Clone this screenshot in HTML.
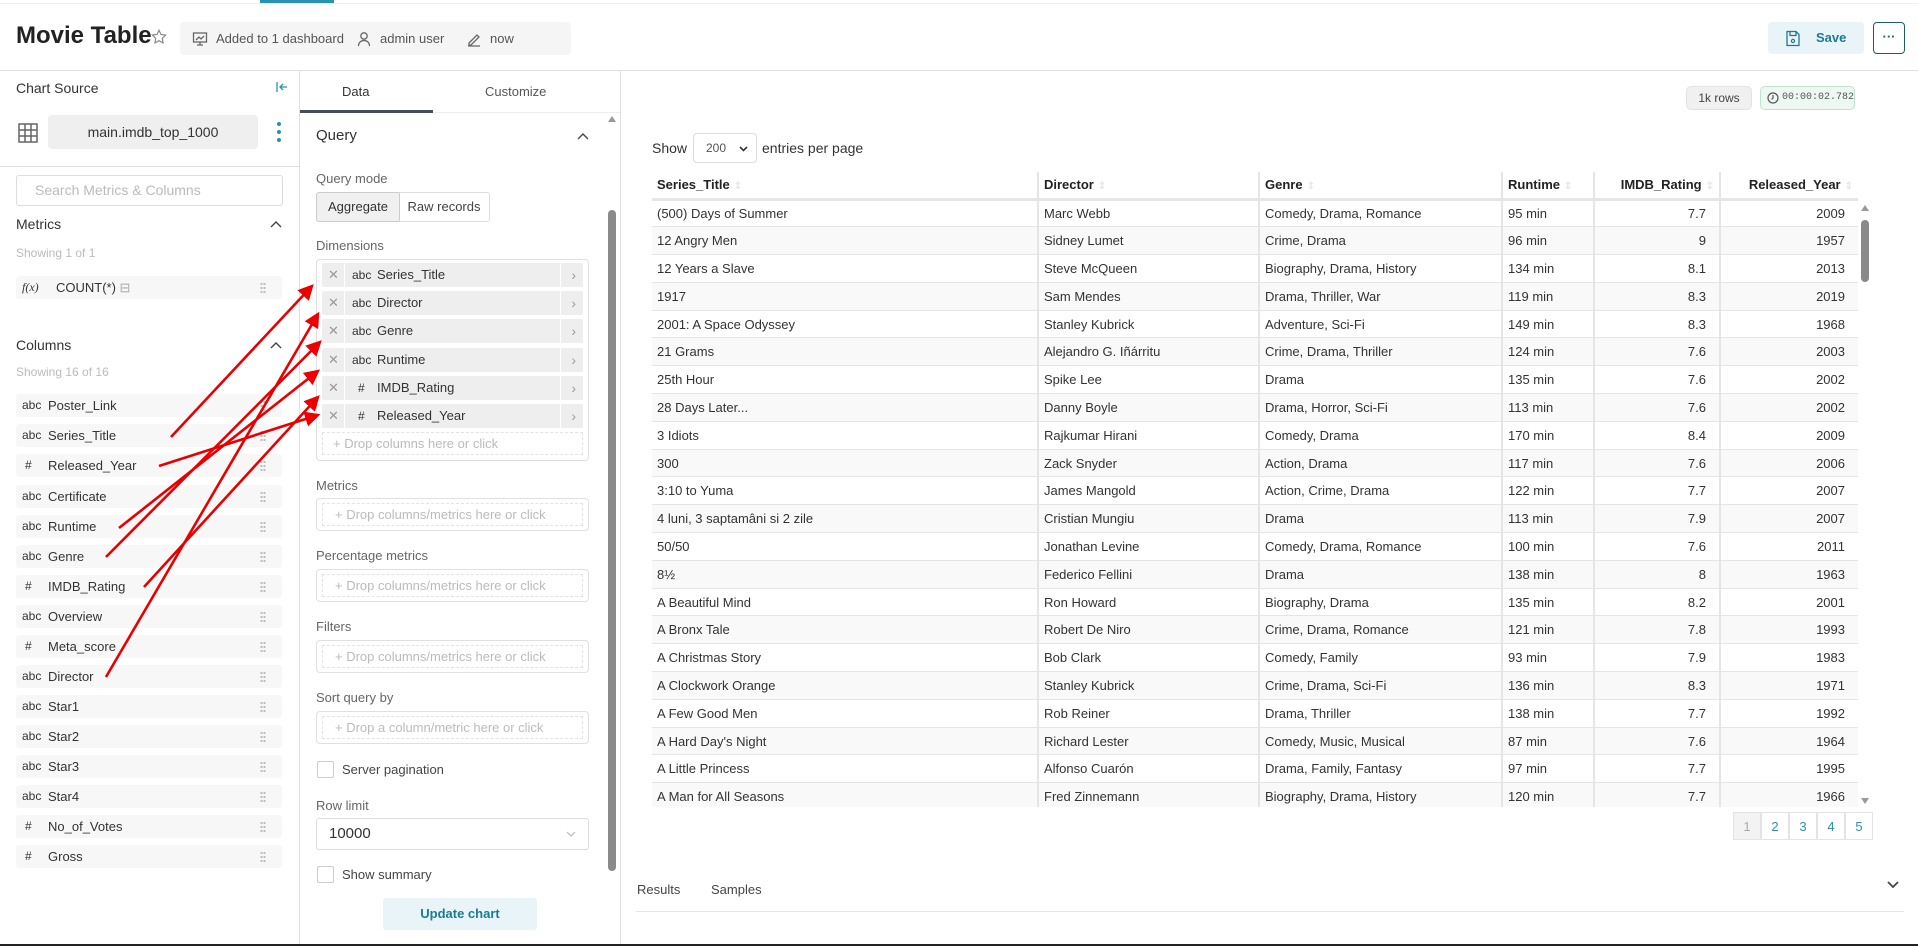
<!DOCTYPE html>
<html><head><meta charset="utf-8">
<style>
*{box-sizing:border-box;margin:0;padding:0}
body{width:1918px;height:946px;overflow:hidden;background:#fff;font-family:"Liberation Sans",sans-serif;color:#333;position:relative;font-size:13px}
.a{position:absolute}
.row{position:absolute;left:16px;width:266px;height:23px;background:#f7f7f7;border-radius:3px;font-size:13px;color:#333;line-height:23px}
.row .t{position:absolute;left:6px;font-size:12px;color:#333}
.row .t.h{left:9px}
.row .n{position:absolute;left:32px}
.grip{position:absolute;right:16px;top:6px;width:6px;height:11px;background:radial-gradient(circle,#bbb 1px,transparent 1.3px) 0 0/3px 4px}
.dim{position:absolute;left:322px;width:261px;height:24px;background:#eee;border-radius:2px;font-size:13px;line-height:24px}
.dim .x{position:absolute;left:6px;color:#999;font-size:13px}
.dim .sep{position:absolute;left:22px;top:0;width:1px;height:24px;background:#fff}
.dim .sep2{position:absolute;right:22px;top:0;width:1px;height:24px;background:#fff}
.dim .t{position:absolute;left:30px;font-size:12px}
.dim .t.h{left:36px}
.dim .n{position:absolute;left:55px}
.dim .c{position:absolute;right:7px;color:#999;font-size:14px}
.drop{position:absolute;left:316px;width:273px;height:33px;border:1px solid #e0e0e0;border-radius:4px}
.drop div{position:absolute;left:5px;right:5px;top:4px;bottom:4px;border:1px dashed #e3e3e3;color:#bbb;font-size:13px;line-height:22px;padding-left:12px}
table{border-collapse:collapse;font-size:13px;color:#333;table-layout:fixed}
td{height:27.8px;padding:0 5px;border-bottom:1px solid #e5e5e5;white-space:nowrap;overflow:hidden}
td.r{text-align:right;padding-right:13px}
td+td{border-left:2px solid #e5e5e5}
tr:nth-child(odd) td{background:#f9f9f9}
th{height:27px;text-align:left;padding:0 5px;font-weight:bold;font-size:13px;border-bottom:3px solid #e5e5e5;color:#222}
th+th{border-left:2px solid #e5e5e5}
th.r{text-align:right}
th span{color:#ddd;font-size:10px;font-weight:normal;margin-left:4px}
.chk{position:absolute;left:317px;width:17px;height:17px;border:1px solid #ccc;border-radius:2px}
.pg{position:absolute;top:812px;height:28px;width:28px;border:1px solid #e3e3e3;text-align:center;line-height:27px;color:#2f8fa8;font-size:13px}
.up{position:absolute}
</style></head><body>
<div class="a" style="left:0;top:3px;width:1918px;height:1px;background:#eee"></div>
<div class="a" style="left:260px;top:0;width:74px;height:3px;background:#2893b0"></div>
<div class="a" style="left:16px;top:22px;font-size:24px;font-weight:bold;color:#222">Movie Table</div>
<svg class="a" style="left:150px;top:28px" width="18" height="18" viewBox="0 0 24 24"><path d="M12 3l2.7 5.6 6.1.8-4.4 4.3 1 6.1L12 16.9 6.6 19.8l1-6.1L3.2 9.4l6.1-.8z" fill="none" stroke="#888" stroke-width="1.6"/></svg>
<div class="a" style="left:180px;top:22px;width:391px;height:33px;background:#f5f5f5;border-radius:4px;font-size:13px;color:#555;line-height:33px">
<svg class="a" style="left:12px;top:9px" width="16" height="16" viewBox="0 0 16 16"><rect x="1.5" y="2" width="13" height="9" fill="none" stroke="#666" stroke-width="1.3"/><path d="M4 9l3-3 2 2 3-3M8 11v3M5 14h6" fill="none" stroke="#666" stroke-width="1.3"/></svg>
<span class="a" style="left:36px">Added to 1 dashboard</span>
<svg class="a" style="left:176px;top:9px" width="16" height="16" viewBox="0 0 16 16"><circle cx="8" cy="5" r="3.2" fill="none" stroke="#666" stroke-width="1.3"/><path d="M2.5 15c0-3.5 2.5-5.5 5.5-5.5s5.5 2 5.5 5.5" fill="none" stroke="#666" stroke-width="1.3"/></svg>
<span class="a" style="left:200px">admin user</span>
<svg class="a" style="left:286px;top:9px" width="16" height="16" viewBox="0 0 16 16"><path d="M3 12l8-8 2 2-8 8H3zM2 15h12" fill="none" stroke="#666" stroke-width="1.3"/></svg>
<span class="a" style="left:310px">now</span>
</div>
<div class="a" style="left:1768px;top:22px;width:96px;height:32px;background:#e8f4f8;border-radius:4px;color:#1f7a8f;font-weight:bold;font-size:13px;line-height:32px">
<svg class="a" style="left:17px;top:8px" width="16" height="17" viewBox="0 0 16 17"><path d="M2 1.5h9l3 3v11H2z M5 1.5v4h6v-4" fill="none" stroke="#1f7a8f" stroke-width="1.3"/><circle cx="8" cy="11" r="1.6" fill="none" stroke="#1f7a8f" stroke-width="1.2"/></svg>
<span class="a" style="left:48px">Save</span></div>
<div class="a" style="left:1873px;top:22px;width:32px;height:32px;border:1px solid #1f5c6b;border-radius:4px;text-align:center;line-height:28px;font-weight:bold;color:#1f5c6b">···</div>
<div class="a" style="left:0;top:70px;width:1918px;height:1px;background:#e0e0e0"></div>
<div class="a" style="left:299px;top:70px;width:1px;height:874px;background:#e0e0e0"></div>
<div class="a" style="left:16px;top:80px;font-size:14px;color:#333">Chart Source</div>
<svg class="a" style="left:276px;top:81px" width="12" height="12" viewBox="0 0 12 12"><path d="M1 1v10M11 6H4M7 3L4 6l3 3" fill="none" stroke="#2893b0" stroke-width="1.3"/></svg>
<svg class="a" style="left:18px;top:123px" width="20" height="20" viewBox="0 0 20 20"><path d="M1 1h18v18H1zM1 7h18M1 13h18M7 1v18M13 1v18" fill="none" stroke="#666" stroke-width="1.5"/></svg>
<div class="a" style="left:48px;top:115px;width:210px;height:34px;background:#efefef;border-radius:4px;text-align:center;line-height:34px;font-size:14px;color:#333">main.imdb_top_1000</div>
<div class="a" style="left:277px;top:122px;width:4px;height:4px;border-radius:2px;background:#2893b0"></div>
<div class="a" style="left:277px;top:130px;width:4px;height:4px;border-radius:2px;background:#2893b0"></div>
<div class="a" style="left:277px;top:138px;width:4px;height:4px;border-radius:2px;background:#2893b0"></div>
<div class="a" style="left:0;top:166px;width:299px;height:1px;background:#e0e0e0"></div>
<div class="a" style="left:16px;top:175px;width:267px;height:31px;border:1px solid #ddd;border-radius:3px;color:#bbb;font-size:14px;line-height:29px;padding-left:18px">Search Metrics &amp; Columns</div>
<div class="a" style="left:16px;top:216px;font-size:14px">Metrics</div>
<svg class="up" style="left:270px;top:220px" width="12" height="8" viewBox="0 0 12 8"><path d="M1 7l5-5 5 5" fill="none" stroke="#444" stroke-width="1.4"/></svg>
<div class="a" style="left:16px;top:246px;font-size:12px;color:#bbb">Showing 1 of 1</div>
<div class="row" style="top:276px"><span class="t" style="font-style:italic;font-family:'Liberation Serif',serif">f(x)</span><span class="n" style="left:40px">COUNT(*) <span style="color:#aaa">&#8863;</span></span><div class="grip"></div></div>
<div class="a" style="left:16px;top:337px;font-size:14px">Columns</div>
<svg class="up" style="left:270px;top:341px" width="12" height="8" viewBox="0 0 12 8"><path d="M1 7l5-5 5 5" fill="none" stroke="#444" stroke-width="1.4"/></svg>
<div class="a" style="left:16px;top:365px;font-size:12px;color:#bbb">Showing 16 of 16</div>
<div class="row" style="top:394px"><span class="t">abc</span><span class="n">Poster_Link</span><div class="grip"></div></div>
<div class="row" style="top:424px"><span class="t">abc</span><span class="n">Series_Title</span><div class="grip"></div></div>
<div class="row" style="top:454px"><span class="t h">#</span><span class="n">Released_Year</span><div class="grip"></div></div>
<div class="row" style="top:485px"><span class="t">abc</span><span class="n">Certificate</span><div class="grip"></div></div>
<div class="row" style="top:515px"><span class="t">abc</span><span class="n">Runtime</span><div class="grip"></div></div>
<div class="row" style="top:545px"><span class="t">abc</span><span class="n">Genre</span><div class="grip"></div></div>
<div class="row" style="top:575px"><span class="t h">#</span><span class="n">IMDB_Rating</span><div class="grip"></div></div>
<div class="row" style="top:605px"><span class="t">abc</span><span class="n">Overview</span><div class="grip"></div></div>
<div class="row" style="top:635px"><span class="t h">#</span><span class="n">Meta_score</span><div class="grip"></div></div>
<div class="row" style="top:665px"><span class="t">abc</span><span class="n">Director</span><div class="grip"></div></div>
<div class="row" style="top:695px"><span class="t">abc</span><span class="n">Star1</span><div class="grip"></div></div>
<div class="row" style="top:725px"><span class="t">abc</span><span class="n">Star2</span><div class="grip"></div></div>
<div class="row" style="top:755px"><span class="t">abc</span><span class="n">Star3</span><div class="grip"></div></div>
<div class="row" style="top:785px"><span class="t">abc</span><span class="n">Star4</span><div class="grip"></div></div>
<div class="row" style="top:815px"><span class="t h">#</span><span class="n">No_of_Votes</span><div class="grip"></div></div>
<div class="row" style="top:845px"><span class="t h">#</span><span class="n">Gross</span><div class="grip"></div></div>
<div class="a" style="left:620px;top:70px;width:1px;height:874px;background:#e0e0e0"></div>
<div class="a" style="left:300px;top:112px;width:320px;height:1px;background:#eee"></div>
<div class="a" style="left:300px;top:110px;width:133px;height:3px;background:#444c5e"></div>
<div class="a" style="left:342px;top:84px;font-size:13px;color:#333">Data</div>
<div class="a" style="left:485px;top:84px;font-size:13px;color:#555">Customize</div>
<div class="a" style="left:316px;top:127px;font-size:15px;color:#333">Query</div>
<svg class="up" style="left:577px;top:132px" width="12" height="8" viewBox="0 0 12 8"><path d="M1 7l5-5 5 5" fill="none" stroke="#444" stroke-width="1.4"/></svg>
<div class="a" style="left:316px;top:171px;font-size:13px;color:#666">Query mode</div>
<div class="a" style="left:316px;top:192px;width:84px;height:30px;background:#f0f0f0;border:1px solid #ccc;border-radius:3px 0 0 3px;text-align:center;line-height:28px;font-size:13px;color:#333">Aggregate</div>
<div class="a" style="left:399px;top:192px;width:91px;height:30px;border:1px solid #ddd;border-left:none;border-radius:0 3px 3px 0;text-align:center;line-height:28px;font-size:13px;color:#444">Raw records</div>
<div class="a" style="left:316px;top:238px;font-size:13px;color:#666">Dimensions</div>
<div class="a" style="left:316px;top:259px;width:273px;height:202px;border:1px solid #e0e0e0;border-radius:4px"></div>
<div class="dim" style="top:263px"><span class="x">✕</span><div class="sep"></div><span class="t">abc</span><span class="n">Series_Title</span><div class="sep2"></div><span class="c">›</span></div>
<div class="dim" style="top:291px"><span class="x">✕</span><div class="sep"></div><span class="t">abc</span><span class="n">Director</span><div class="sep2"></div><span class="c">›</span></div>
<div class="dim" style="top:319px"><span class="x">✕</span><div class="sep"></div><span class="t">abc</span><span class="n">Genre</span><div class="sep2"></div><span class="c">›</span></div>
<div class="dim" style="top:348px"><span class="x">✕</span><div class="sep"></div><span class="t">abc</span><span class="n">Runtime</span><div class="sep2"></div><span class="c">›</span></div>
<div class="dim" style="top:376px"><span class="x">✕</span><div class="sep"></div><span class="t h">#</span><span class="n">IMDB_Rating</span><div class="sep2"></div><span class="c">›</span></div>
<div class="dim" style="top:404px"><span class="x">✕</span><div class="sep"></div><span class="t h">#</span><span class="n">Released_Year</span><div class="sep2"></div><span class="c">›</span></div>
<div class="a" style="left:322px;top:432px;width:261px;height:23px;border:1px dashed #e3e3e3;color:#bbb;font-size:13px;line-height:21px;padding-left:10px">+ Drop columns here or click</div>
<div class="a" style="left:316px;top:478px;font-size:13px;color:#666">Metrics</div>
<div class="drop" style="top:498px"><div>+ Drop columns/metrics here or click</div></div>
<div class="a" style="left:316px;top:548px;font-size:13px;color:#666">Percentage metrics</div>
<div class="drop" style="top:569px"><div>+ Drop columns/metrics here or click</div></div>
<div class="a" style="left:316px;top:619px;font-size:13px;color:#666">Filters</div>
<div class="drop" style="top:640px"><div>+ Drop columns/metrics here or click</div></div>
<div class="a" style="left:316px;top:690px;font-size:13px;color:#666">Sort query by</div>
<div class="drop" style="top:711px"><div>+ Drop a column/metric here or click</div></div>
<div class="chk" style="top:761px"></div>
<div class="a" style="left:342px;top:762px;font-size:13px;color:#444">Server pagination</div>
<div class="a" style="left:316px;top:798px;font-size:13px;color:#666">Row limit</div>
<div class="a" style="left:316px;top:818px;width:273px;height:32px;border:1px solid #ddd;border-radius:3px;font-size:15px;line-height:30px;padding-left:12px;color:#333">10000<svg class="a" style="right:12px;top:12px" width="10" height="7" viewBox="0 0 10 7"><path d="M1 1l4 4 4-4" fill="none" stroke="#bbb" stroke-width="1.2"/></svg></div>
<div class="chk" style="top:866px"></div>
<div class="a" style="left:342px;top:867px;font-size:13px;color:#444">Show summary</div>
<div class="a" style="left:383px;top:898px;width:154px;height:32px;background:#e8f4f8;border-radius:3px;text-align:center;line-height:32px;color:#1f7a8f;font-weight:bold;font-size:13px">Update chart</div>
<div class="a" style="left:608px;top:116px;width:0;height:0;border:4px solid transparent;border-bottom:6px solid #999;border-top:none"></div>
<div class="a" style="left:608px;top:210px;width:8px;height:661px;background:#8a8a8a;border-radius:4px"></div>
<div class="a" style="left:1686px;top:86px;width:66px;height:24px;background:#f0f0f0;border:1px solid #e3e3e3;border-radius:5px;text-align:center;line-height:22px;font-size:12px;color:#444">1k rows</div>
<div class="a" style="left:1760px;top:86px;width:95px;height:24px;background:#eef8f2;border:1px solid #bfe3cc;border-radius:5px;line-height:22px;font-size:10px;color:#555;font-family:'Liberation Mono',monospace;padding-left:21px;white-space:nowrap">00:00:02.782
<svg class="a" style="left:6px;top:5px" width="12" height="12" viewBox="0 0 12 12"><circle cx="6" cy="6" r="5" fill="none" stroke="#555" stroke-width="1.2"/><path d="M6 3v3l-1.5 1.5" fill="none" stroke="#555" stroke-width="1.2"/></svg></div>
<div class="a" style="left:652px;top:140px;font-size:14px;color:#333">Show</div>
<div class="a" style="left:693px;top:133px;width:64px;height:30px;border:1px solid #ddd;border-radius:4px;font-size:12px;line-height:28px;padding-left:12px;color:#555">200<svg class="a" style="right:8px;top:12px" width="9" height="6" viewBox="0 0 9 6"><path d="M1 1l3.5 3.5L8 1" fill="none" stroke="#333" stroke-width="1.6"/></svg></div>
<div class="a" style="left:762px;top:140px;font-size:14px;color:#333">entries per page</div>
<div class="a" style="left:652px;top:172px;width:1206px;height:635px;overflow:hidden">
<table style="width:1206px">
<colgroup><col style="width:386px"><col style="width:221px"><col style="width:243px"><col style="width:92px"><col style="width:126px"><col style="width:138px"></colgroup>
<tr><th>Series_Title<span>⇕</span></th><th>Director<span>⇕</span></th><th>Genre<span>⇕</span></th><th>Runtime<span>⇕</span></th><th class="r">IMDB_Rating<span>⇕</span></th><th class="r">Released_Year<span>⇕</span></th></tr>
<tr><td>(500) Days of Summer</td><td>Marc Webb</td><td>Comedy, Drama, Romance</td><td>95 min</td><td class="r">7.7</td><td class="r">2009</td></tr>
<tr><td>12 Angry Men</td><td>Sidney Lumet</td><td>Crime, Drama</td><td>96 min</td><td class="r">9</td><td class="r">1957</td></tr>
<tr><td>12 Years a Slave</td><td>Steve McQueen</td><td>Biography, Drama, History</td><td>134 min</td><td class="r">8.1</td><td class="r">2013</td></tr>
<tr><td>1917</td><td>Sam Mendes</td><td>Drama, Thriller, War</td><td>119 min</td><td class="r">8.3</td><td class="r">2019</td></tr>
<tr><td>2001: A Space Odyssey</td><td>Stanley Kubrick</td><td>Adventure, Sci-Fi</td><td>149 min</td><td class="r">8.3</td><td class="r">1968</td></tr>
<tr><td>21 Grams</td><td>Alejandro G. Iñárritu</td><td>Crime, Drama, Thriller</td><td>124 min</td><td class="r">7.6</td><td class="r">2003</td></tr>
<tr><td>25th Hour</td><td>Spike Lee</td><td>Drama</td><td>135 min</td><td class="r">7.6</td><td class="r">2002</td></tr>
<tr><td>28 Days Later...</td><td>Danny Boyle</td><td>Drama, Horror, Sci-Fi</td><td>113 min</td><td class="r">7.6</td><td class="r">2002</td></tr>
<tr><td>3 Idiots</td><td>Rajkumar Hirani</td><td>Comedy, Drama</td><td>170 min</td><td class="r">8.4</td><td class="r">2009</td></tr>
<tr><td>300</td><td>Zack Snyder</td><td>Action, Drama</td><td>117 min</td><td class="r">7.6</td><td class="r">2006</td></tr>
<tr><td>3:10 to Yuma</td><td>James Mangold</td><td>Action, Crime, Drama</td><td>122 min</td><td class="r">7.7</td><td class="r">2007</td></tr>
<tr><td>4 luni, 3 saptamâni si 2 zile</td><td>Cristian Mungiu</td><td>Drama</td><td>113 min</td><td class="r">7.9</td><td class="r">2007</td></tr>
<tr><td>50/50</td><td>Jonathan Levine</td><td>Comedy, Drama, Romance</td><td>100 min</td><td class="r">7.6</td><td class="r">2011</td></tr>
<tr><td>8½</td><td>Federico Fellini</td><td>Drama</td><td>138 min</td><td class="r">8</td><td class="r">1963</td></tr>
<tr><td>A Beautiful Mind</td><td>Ron Howard</td><td>Biography, Drama</td><td>135 min</td><td class="r">8.2</td><td class="r">2001</td></tr>
<tr><td>A Bronx Tale</td><td>Robert De Niro</td><td>Crime, Drama, Romance</td><td>121 min</td><td class="r">7.8</td><td class="r">1993</td></tr>
<tr><td>A Christmas Story</td><td>Bob Clark</td><td>Comedy, Family</td><td>93 min</td><td class="r">7.9</td><td class="r">1983</td></tr>
<tr><td>A Clockwork Orange</td><td>Stanley Kubrick</td><td>Crime, Drama, Sci-Fi</td><td>136 min</td><td class="r">8.3</td><td class="r">1971</td></tr>
<tr><td>A Few Good Men</td><td>Rob Reiner</td><td>Drama, Thriller</td><td>138 min</td><td class="r">7.7</td><td class="r">1992</td></tr>
<tr><td>A Hard Day's Night</td><td>Richard Lester</td><td>Comedy, Music, Musical</td><td>87 min</td><td class="r">7.6</td><td class="r">1964</td></tr>
<tr><td>A Little Princess</td><td>Alfonso Cuarón</td><td>Drama, Family, Fantasy</td><td>97 min</td><td class="r">7.7</td><td class="r">1995</td></tr>
<tr><td>A Man for All Seasons</td><td>Fred Zinnemann</td><td>Biography, Drama, History</td><td>120 min</td><td class="r">7.7</td><td class="r">1966</td></tr>
</table></div>
<div class="a" style="left:1861px;top:205px;border:4px solid transparent;border-bottom:6px solid #999;border-top:none"></div>
<div class="a" style="left:1861px;top:220px;width:8px;height:62px;background:#8a8a8a;border-radius:4px"></div>
<div class="a" style="left:1861px;top:798px;border:4px solid transparent;border-top:6px solid #999;border-bottom:none"></div>
<div class="pg" style="left:1733px;background:#f3f3f3;color:#aaa">1</div>
<div class="pg" style="left:1761px">2</div>
<div class="pg" style="left:1789px">3</div>
<div class="pg" style="left:1817px">4</div>
<div class="pg" style="left:1845px">5</div>
<div class="a" style="left:637px;top:882px;font-size:13px;color:#444">Results</div>
<div class="a" style="left:711px;top:882px;font-size:13px;color:#444">Samples</div>
<svg class="a" style="left:1886px;top:880px" width="14" height="10" viewBox="0 0 14 10"><path d="M2 2l5 5 5-5" fill="none" stroke="#444" stroke-width="1.8"/></svg>
<div class="a" style="left:636px;top:911px;width:1268px;height:1px;background:#e5e5e5"></div>
<div class="a" style="left:0;top:944px;width:1918px;height:2px;background:#222"></div>
<svg class="a" style="left:0;top:0" width="1918" height="946">
<defs><marker id="ah" markerWidth="6" markerHeight="6" refX="5" refY="3" orient="auto" markerUnits="strokeWidth"><path d="M0 0L6 3L0 6z" fill="#e00"/></marker></defs>
<g stroke="#e80000" stroke-width="2.6" fill="none" marker-end="url(#ah)">
<line x1="171" y1="437" x2="312" y2="286"/>
<line x1="159" y1="466" x2="318" y2="415"/>
<line x1="119" y1="528" x2="318" y2="371"/>
<line x1="106" y1="557" x2="320" y2="342"/>
<line x1="144" y1="587" x2="318" y2="397"/>
<line x1="106" y1="677" x2="318" y2="314"/>
</g></svg>
</body></html>
